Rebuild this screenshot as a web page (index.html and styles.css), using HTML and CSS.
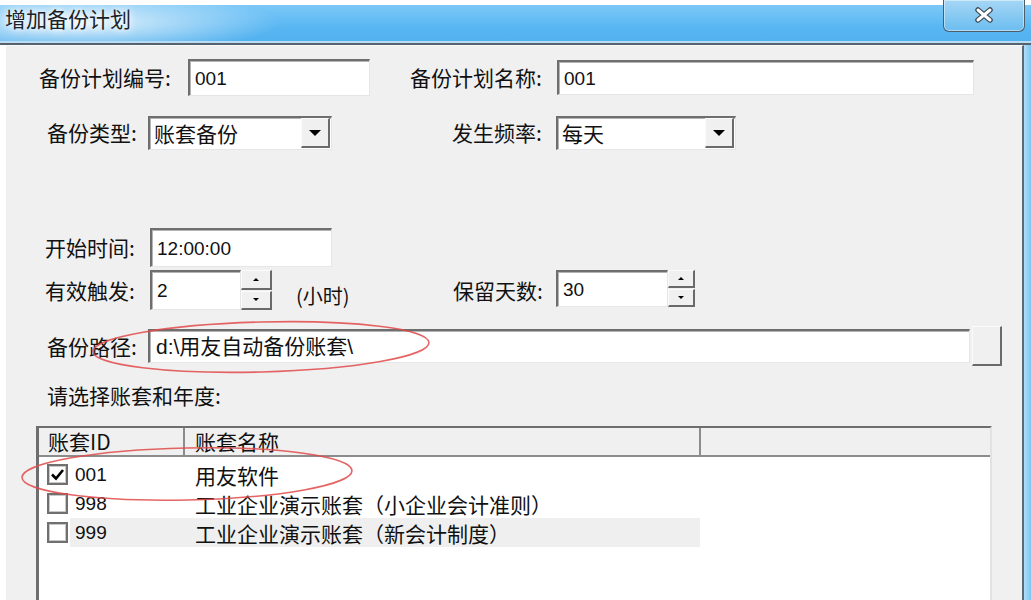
FILE: index.html
```html
<!DOCTYPE html>
<html lang="zh-CN">
<head>
    <meta charset="UTF-8">
    <title>增加备份计划</title>
    <link rel="stylesheet" href="styles.css">
</head>
<body>
<div class="window">
    <div class="titlebar">
        <span class="title">增加备份计划</span>
        <div class="close-btn">
            <svg width="22" height="16" viewBox="0 0 22 16">
                <path d="M5 3 L17 13 M17 3 L5 13" stroke="#3c4852" stroke-width="5.5" stroke-linecap="round"/>
                <path d="M5 3 L17 13 M17 3 L5 13" stroke="#ffffff" stroke-width="3" stroke-linecap="round"/>
            </svg>
        </div>
    </div>

    <div class="frame">
        <div class="frame-left"></div>
        <div class="content">
            <div class="row row-code">
                <span class="lbl lbl-code">备份计划编号:</span>
                <div class="edit edit-code">001</div>
                <span class="lbl lbl-name">备份计划名称:</span>
                <div class="edit edit-name">001</div>
            </div>

            <div class="row row-type">
                <span class="lbl lbl-type">备份类型:</span>
                <div class="combo combo-type">
                    <span class="combo-text">账套备份</span>
                    <span class="combo-btn"><i class="arrow-down"></i></span>
                </div>
                <span class="lbl lbl-freq">发生频率:</span>
                <div class="combo combo-freq">
                    <span class="combo-text">每天</span>
                    <span class="combo-btn"><i class="arrow-down"></i></span>
                </div>
            </div>

            <div class="row row-time">
                <span class="lbl lbl-time">开始时间:</span>
                <div class="edit edit-time">12:00:00</div>
            </div>

            <div class="row row-trigger">
                <span class="lbl lbl-time">有效触发:</span>
                <div class="edit edit-trigger">2</div>
                <div class="spin spin-trigger">
                    <span class="spin-btn"><i class="tri-up"></i></span>
                    <span class="spin-btn"><i class="tri-down"></i></span>
                </div>
                <span class="unit">(小时)</span>
                <span class="lbl lbl-keep">保留天数:</span>
                <div class="edit edit-keep">30</div>
                <div class="spin spin-keep">
                    <span class="spin-btn"><i class="tri-up"></i></span>
                    <span class="spin-btn"><i class="tri-down"></i></span>
                </div>
            </div>

            <div class="row row-path">
                <span class="lbl lbl-type">备份路径:</span>
                <div class="edit edit-path">d:\用友自动备份账套\</div>
                <div class="browse-btn"></div>
            </div>

            <div class="row row-hint">
                <span class="lbl lbl-type">请选择账套和年度:</span>
            </div>

            <div class="list">
                <div class="list-head">
                    <div class="col col-id">账套ID</div>
                    <div class="col col-name">账套名称</div>
                    <div class="col col-rest"></div>
                </div>
                <div class="list-row">
                    <span class="check">
                        <svg width="17" height="17" viewBox="0 0 17 17"><path d="M3 8.5 L7 12.5 L14 4" fill="none" stroke="#000" stroke-width="2.6"/></svg>
                    </span>
                    <div class="cells">
                        <span class="cell-id">001</span>
                        <span class="cell-name">用友软件</span>
                    </div>
                </div>
                <div class="list-row">
                    <span class="check"></span>
                    <div class="cells">
                        <span class="cell-id">998</span>
                        <span class="cell-name">工业企业演示账套（小企业会计准则）</span>
                    </div>
                </div>
                <div class="list-row row-selected">
                    <span class="check"></span>
                    <div class="cells">
                        <span class="cell-id">999</span>
                        <span class="cell-name">工业企业演示账套（新会计制度）</span>
                    </div>
                </div>
            </div>
        </div>
        <div class="frame-right"></div>
    </div>

    <!-- red annotation marks -->
    <svg class="marks" width="1031" height="600" viewBox="0 0 1031 600">
        <ellipse cx="261" cy="347" rx="168" ry="25" transform="rotate(-1.5 261 347)"/>
        <ellipse cx="187" cy="474" rx="165" ry="26" transform="rotate(-1.2 187 474)"/>
    </svg>
</div>
</body>
</html>
```

FILE: styles.css
```css
body {
    margin: 0;
    background: #ffffff;
    font-family: "Noto Sans CJK SC", sans-serif;
    font-size: 21px;
    color: #111111;
}
.window {
    width: 1031px;
    height: 600px;
    overflow: hidden;
    position: relative;
}

/* title bar */
.titlebar {
    margin-top: 5px;
    height: 38px;
    display: flex;
    border-bottom: 2px solid #56636e;
    box-shadow: inset 0 -2px 0 #b8dcf4;
    background:
        radial-gradient(ellipse 200px 30px at 80px 18px, rgba(235, 245, 252, 0.95), rgba(235, 245, 252, 0) 100%),
        linear-gradient(180deg, #7cc8f7 0%, #58b6f2 60%, #52b1ee 100%);
}
.title {
    margin-left: 5px;
    margin-top: 1px;
    font-size: 21px;
    line-height: 24px;
    color: #1b2228;
    text-shadow: 0 0 6px #ffffff, 0 0 10px #ffffff;
}
.close-btn {
    margin-left: auto;
    margin-right: 6px;
    margin-top: -5px;
    width: 82px;
    height: 32px;
    box-sizing: border-box;
    border: 1px solid #4f5d68;
    border-top: none;
    border-radius: 0 0 6px 6px;
    background: linear-gradient(180deg, #a6d6f5, #6bbdf0);
    box-shadow: inset 0 0 0 1px rgba(255, 255, 255, 0.45);
    display: flex;
    justify-content: center;
    padding-top: 7px;
}

/* window body */
.frame {
    display: flex;
    height: 555px;
}
.frame-left {
    width: 6px;
    background: #ffffff;
}
.frame-right {
    width: 7px;
    background: linear-gradient(90deg, #b0ddf8, #7fc5f2);
}
.content {
    flex: 1;
    background: #f0f0f0;
    border-top: 1px solid #fafafa;
    border-right: 2px solid #5c6a76;
}

.row {
    display: flex;
    align-items: center;
}
.row-code { margin-top: 13px; height: 37px; }
.row-type { margin-top: 19px; height: 35px; }
.row-time { margin-top: 78px; height: 39px; }
.row-trigger { margin-top: 3px; height: 40px; align-items: flex-start; }
.row-path { margin-top: 16px; height: 40px; }
.row-hint { margin-top: 17px; height: 24px; }

.lbl {
    flex: none;
    white-space: nowrap;
    line-height: 1;
}
.lbl-code { margin-left: 33px; width: 149px; }
.lbl-name { margin-left: 40px; width: 147px; }
.lbl-type { margin-left: 41px; width: 101px; }
.lbl-freq { margin-left: 120px; width: 104px; }
.lbl-time { margin-left: 39px; width: 105px; }
.lbl-keep { margin-left: 101px; width: 103px; }
.row-trigger .lbl { margin-top: 10px; }

/* sunken edit boxes */
.edit, .combo {
    flex: none;
    box-sizing: border-box;
    background: #ffffff;
    border-style: solid;
    border-width: 2px 1px 1px 2px;
    border-color: #6e6e6e #e6e6e6 #e6e6e6 #6e6e6e;
    box-shadow: inset 1px 1px 0 #b4b4b4;
    padding-left: 5px;
    font-family: "Liberation Sans", "Noto Sans CJK SC", sans-serif;
    font-size: 19px;
    line-height: 1;
    display: flex;
    align-items: center;
    white-space: nowrap;
}
.edit-code { width: 182px; height: 37px; }
.edit-name { width: 417px; height: 35px; }
.edit-time { width: 182px; height: 39px; }
.edit-trigger { width: 91px; height: 40px; }
.edit-keep { width: 112px; height: 37px; }
.edit-path { width: 822px; height: 34px; padding-left: 6px; font-size: 21px; }

.combo {
    height: 34px;
    padding-left: 4px;
    padding-right: 1px;
}
.combo-type { width: 184px; }
.combo-freq { width: 180px; }
.combo-text {
    flex: 1;
    font-family: "Noto Sans CJK SC", sans-serif;
    font-size: 21px;
}
.combo-btn, .spin-btn, .browse-btn {
    box-sizing: border-box;
    background: #f0f0f0;
    border-style: solid;
    border-width: 1px 2px 2px 1px;
    border-color: #fbfbfb #6a6a6a #6a6a6a #fbfbfb;
    display: flex;
    align-items: center;
    justify-content: center;
}
.combo-btn {
    width: 29px;
    height: 30px;
}
.arrow-down {
    width: 0;
    height: 0;
    border-left: 6px solid transparent;
    border-right: 6px solid transparent;
    border-top: 6px solid #000000;
}

/* spin buttons */
.spin {
    flex: none;
    display: flex;
    flex-direction: column;
    gap: 1px;
}
.spin-trigger { width: 31px; height: 40px; }
.spin-keep { width: 27px; height: 37px; }
.spin-btn { flex: 1; }
.tri-up, .tri-down {
    width: 0;
    height: 0;
    border-left: 3px solid transparent;
    border-right: 3px solid transparent;
}
.tri-up { border-bottom: 3px solid #000000; }
.tri-down { border-top: 3px solid #000000; }

.unit {
    margin-left: 24px;
    width: 56px;
    margin-top: 16px;
    line-height: 1;
    white-space: nowrap;
    font-size: 20px;
}

.browse-btn {
    margin-left: 2px;
    width: 30px;
    height: 40px;
}

/* list view */
.list {
    margin-top: 19px;
    margin-left: 30px;
    width: 956px;
    height: 200px;
    box-sizing: border-box;
    background: #ffffff;
    border-style: solid;
    border-width: 2px 2px 0 3px;
    border-color: #6e6e6e #e2e2e2 #e2e2e2 #6e6e6e;
}
.list-head {
    display: flex;
    height: 29px;
    background: #f0f0f0;
    border-bottom: 2px solid #8c8c8c;
    box-sizing: border-box;
}
.col {
    box-sizing: border-box;
    padding-left: 9px;
    line-height: 27px;
    white-space: nowrap;
    border-right: 2px solid #8c8c8c;
}
.col-id { width: 146px; }
.col-name { width: 516px; padding-left: 10px; }
.col-rest { flex: 1; border-right: none; }

.list-row {
    display: flex;
    align-items: center;
    height: 29px;
}
.list-head + .list-row { margin-top: 3px; }
.check {
    flex: none;
    margin-left: 8px;
    width: 21px;
    height: 21px;
    box-sizing: border-box;
    border: 2px solid #707070;
    box-shadow: inset 0 0 0 1px #c8c8c8;
    background: #ffffff;
    display: flex;
    align-items: center;
    justify-content: center;
}
.cells {
    display: flex;
    align-items: center;
    margin-left: 2px;
    width: 630px;
    height: 29px;
    white-space: nowrap;
}
.row-selected .cells { background: #efefef; }
.cell-id {
    width: 114px;
    box-sizing: border-box;
    padding-left: 5px;
    font-family: "Liberation Sans", sans-serif;
    font-size: 19px;
}
.cell-name { padding-left: 11px; }

/* annotation overlay */
.marks {
    position: absolute;
    left: 0;
    top: 0;
    pointer-events: none;
}
.marks ellipse {
    fill: none;
    stroke: #e14a4a;
    stroke-opacity: 0.85;
    stroke-width: 1.6;
}
```
